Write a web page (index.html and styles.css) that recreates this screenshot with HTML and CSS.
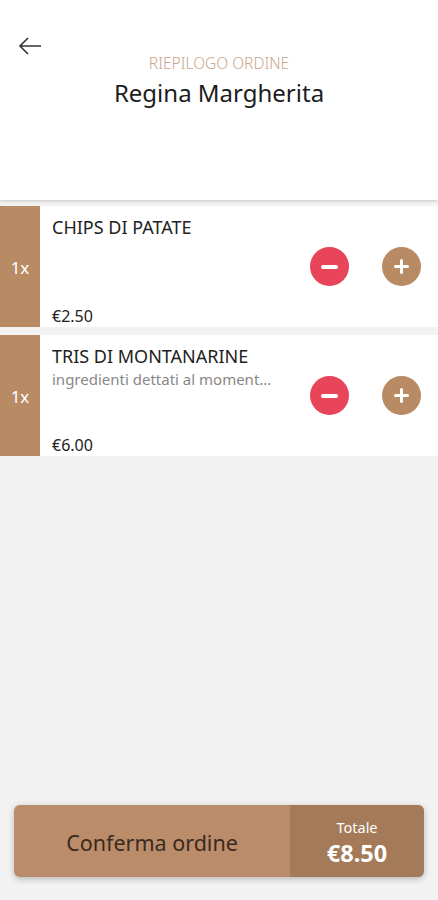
FILE: index.html
```html
<!DOCTYPE html>
<html lang="it">
<head>
  <meta charset="UTF-8" />
  <title>Riepilogo ordine</title>
  <link rel="stylesheet" href="styles.css">
</head>
<body>

  <div class="header">
    <button class="back">
      <svg width="26" height="20" viewBox="0 0 26 20"><path d="M24 10H3M11 2L3 10l8 8" fill="none" stroke="#333" stroke-width="1.6"/></svg>
    </button>
    <div class="subtitle">RIEPILOGO ORDINE</div>
    <h1 class="title">Regina Margherita</h1>
  </div>

  <div class="list">
    <div class="item">
      <div class="qty">1x</div>
      <div class="info">
        <div class="name">CHIPS DI PATATE</div>
        <div class="desc"></div>
        <div class="price">€2.50</div>
      </div>
      <div class="actions">
        <span class="btn minus"></span>
        <span class="btn plus"></span>
      </div>
    </div>
    <div class="item">
      <div class="qty">1x</div>
      <div class="info">
        <div class="name">TRIS DI MONTANARINE</div>
        <div class="desc">ingredienti dettati al moment...</div>
        <div class="price">€6.00</div>
      </div>
      <div class="actions">
        <span class="btn minus"></span>
        <span class="btn plus"></span>
      </div>
    </div>
  </div>

  <div class="footer">
    <div class="confirm">
      <div class="confirm-label">Conferma ordine</div>
      <div class="total">
        <span class="total-label">Totale</span>
        <span class="total-value">€8.50</span>
      </div>
    </div>
  </div>

</body>
</html>
```

FILE: styles.css
```css
body {
  margin: 0;
  font-family: "Noto Sans", Roboto, sans-serif;
  background: #f2f2f2;
  height: 900px;
  display: flex;
  flex-direction: column;
  overflow: hidden;
}

.header {
  background: white;
  height: 200px;
  box-sizing: border-box;
  padding-top: 53px;
  text-align: center;
  position: relative;
  box-shadow: 0 1px 3px rgba(0,0,0,0.18);
  z-index: 1;
}

.back {
  position: absolute;
  left: 17px;
  top: 36px;
  background: none;
  border: none;
  padding: 0;
}

.subtitle {
  color: #c9a68c;
  font-size: 15.5px;
  line-height: 21px;
  font-weight: 300;
}

.title {
  margin: 4px 0 0;
  font-size: 24px;
  line-height: 30px;
  font-weight: 400;
  color: #1d1d1d;
}

.list {
  flex: 1;
  padding-top: 6px;
  display: flex;
  flex-direction: column;
  gap: 8px;
}

.item {
  background: white;
  height: 121px;
  display: flex;
}

.qty {
  width: 40px;
  background: #b98b65;
  color: white;
  font-size: 17px;
  display: flex;
  align-items: center;
  justify-content: center;
  padding-top: 2px;
}

.info {
  flex: 1;
  padding: 9px 12px 0;
  display: flex;
  flex-direction: column;
}

.name {
  font-size: 18px;
  line-height: 24px;
  color: #222;
}

.desc {
  font-size: 15px;
  line-height: 20px;
  color: #888;
  margin-top: 1px;
  flex: 1;
}

.price {
  font-size: 16px;
  line-height: 22px;
  color: #222;
}

.actions {
  display: flex;
  align-items: center;
  gap: 33px;
  padding-right: 17px;
}

.btn {
  width: 39px;
  height: 39px;
  border-radius: 50%;
  position: relative;
}

.minus { background: #e8445a; }
.plus { background: #b98b65; }

.btn::before, .plus::after {
  content: "";
  position: absolute;
  background: white;
  border-radius: 2px;
  left: 11px;
  top: 18px;
  width: 17px;
  height: 4px;
}

.plus::before {
  left: 12px;
  top: 18px;
  width: 15px;
  height: 3px;
}

.plus::after {
  left: 18px;
  top: 12px;
  width: 3px;
  height: 15px;
}

.footer {
  padding: 0 14px 23px;
}

.confirm {
  height: 72px;
  border-radius: 6px;
  overflow: hidden;
  display: flex;
  background: #ba8c6a;
  box-shadow: 0 2px 6px rgba(0,0,0,0.25);
}

.confirm-label {
  flex: 1;
  display: flex;
  align-items: center;
  justify-content: center;
  font-size: 21.5px;
  color: #3b2a1e;
  padding-top: 2px;
}

.total {
  width: 134px;
  background: #a47a58;
  color: white;
  display: flex;
  flex-direction: column;
  align-items: center;
  justify-content: center;
  padding-top: 1px;
}

.total-label {
  font-size: 14.5px;
  line-height: 18px;
}

.total-value {
  font-size: 23.5px;
  line-height: 26px;
  margin-top: 4px;
  font-weight: 700;
}
```
